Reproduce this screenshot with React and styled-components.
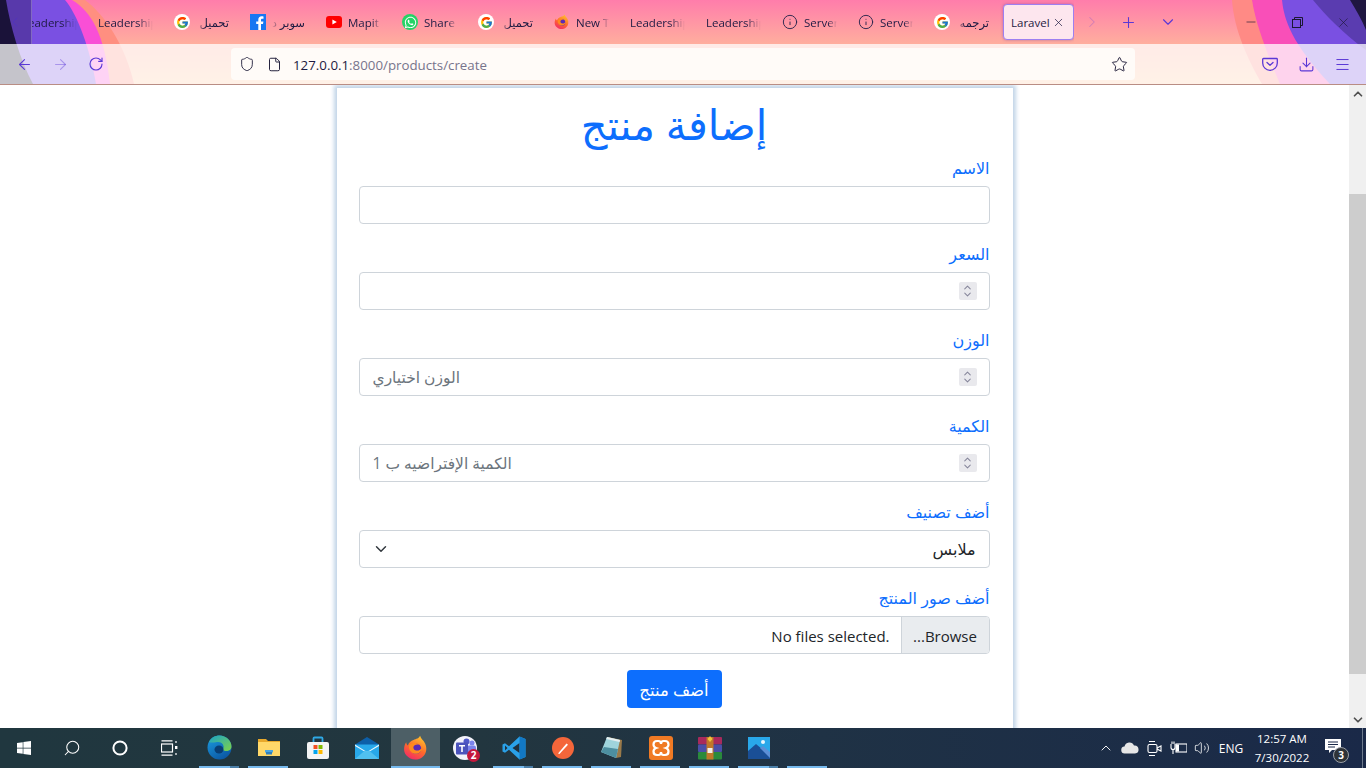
import React from 'react';
import styled, { createGlobalStyle } from 'styled-components';
import {
  ArrowLeft,
  ArrowRight,
  ChevronDown,
  ChevronLeft,
  ChevronRight,
  ChevronUp,
  Download,
  File,
  Info,
  Menu,
  Minus,
  Plus,
  RotateCw,
  Search,
  Shield,
  Star,
  Volume2,
  X
} from 'lucide-react';
import { FaWhatsapp, FaWindows } from 'react-icons/fa';
import { FcGoogle } from 'react-icons/fc';

const uiFont = `"Open Sans", "DejaVu Sans", sans-serif`;
const chevronData =
  "url(\"data:image/svg+xml,%3csvg xmlns='http://www.w3.org/2000/svg' viewBox='0 0 16 16'%3e%3cpath fill='none' stroke='%23343a40' stroke-linecap='round' stroke-linejoin='round' stroke-width='2' d='M2 5l6 6 6-6'/%3e%3c/svg%3e\")";

const GlobalStyle = createGlobalStyle`
  html, body {
    margin: 0;
    height: 100%;
    overflow: hidden;
    background: #fff;
  }
  * {
    box-sizing: border-box;
  }
`;

const Screen = styled.div`
  display: flex;
  flex-direction: column;
  width: 1366px;
  height: 768px;
  overflow: hidden;
  font-family: ${uiFont};
`;

/* browser chrome */
const Chrome = styled.header`
  position: relative;
  flex: none;
  height: 85px;
  border-bottom: 1px solid #b98d84;
  background: linear-gradient(180deg, #ff7dab 0, #ffae9e 44px, #ffc8a0 84px);
`;

const ThemeArt = styled.svg`
  position: absolute;
  top: 0;
  left: 0;
`;

const TabStrip = styled.div`
  position: relative;
  display: flex;
  align-items: center;
  height: 44px;
`;

const ScrollButton = styled.div`
  display: flex;
  flex: none;
  align-items: center;
  justify-content: ${p => (p.$wide ? 'center' : 'flex-start')};
  width: ${p => (p.$wide ? '36px' : '32px')};
  height: 44px;
  padding-left: ${p => (p.$wide ? '0' : '7px')};
  border-right: ${p => (p.$wide ? 'none' : '1px solid rgba(255, 255, 255, 0.25)')};
  background: ${p => (p.$wide ? 'transparent' : 'rgba(25, 15, 70, 0.35)')};
  color: ${p => (p.$wide ? 'rgba(110, 70, 220, 0.3)' : 'rgba(80, 50, 190, 0.9)')};
`;

const TabList = styled.div`
  display: flex;
  flex: none;
  align-items: center;
  width: 1042px;
  height: 44px;
  overflow: hidden;
`;

const Tab = styled.div`
  display: flex;
  flex: none;
  align-items: center;
  gap: 6px;
  width: 76px;
  height: 36px;
  padding: 0 13px 0 8px;
  color: #1d1a42;
  font-size: 11.5px;

  &:first-child {
    margin-left: -18px;
  }
`;

const ActiveTab = styled.div`
  display: flex;
  flex: none;
  align-items: center;
  justify-content: space-between;
  width: 71px;
  height: 36px;
  margin-left: 1px;
  padding: 0 8px 0 7px;
  border: 1px solid #9d7ff0;
  border-radius: 4px;
  background: #fde6ee;
  box-shadow: 0 0 3px rgba(80, 40, 160, 0.4);
  color: #1d1a42;
  font-size: 11.5px;
`;

const TabLabel = styled.span`
  flex: 1;
  min-width: 0;
  overflow: hidden;
  white-space: nowrap;
  text-align: ${p => (p.$rtl ? 'right' : 'left')};
  direction: ${p => (p.$rtl ? 'rtl' : 'ltr')};
  -webkit-mask-image: linear-gradient(
    ${p => (p.$rtl ? '270deg' : '90deg')},
    #000 72%,
    transparent 100%
  );
  mask-image: linear-gradient(
    ${p => (p.$rtl ? '270deg' : '90deg')},
    #000 72%,
    transparent 100%
  );
`;

const FaviconBox = styled.span`
  display: flex;
  flex: none;
  align-items: center;
  justify-content: center;
  width: 16px;
  height: 16px;
  overflow: hidden;
  border-radius: ${p => (p.$round ? '50%' : '0')};
  background: ${p => p.$bg || 'transparent'};
  color: ${p => p.$color || 'inherit'};
`;

const StripButton = styled.div`
  display: flex;
  flex: none;
  align-items: center;
  justify-content: center;
  width: 36px;
  height: 44px;
  margin-left: ${p => p.$shift || 0}px;
  color: #5a38d6;
`;

const StripSpacer = styled.div`
  flex: 1;
`;

const WindowButton = styled.div`
  display: flex;
  flex: none;
  align-items: center;
  justify-content: center;
  width: 46px;
  height: 44px;
  color: #1b1733;
`;

const NavBar = styled.nav`
  position: relative;
  display: flex;
  align-items: center;
  height: 40px;
  padding: 0 6px;
  background: rgba(255, 255, 255, 0.75);
`;

const NavButton = styled.div`
  display: flex;
  flex: none;
  align-items: center;
  justify-content: center;
  width: 36px;
  height: 32px;
  color: ${p => (p.$muted ? 'rgba(90, 56, 214, 0.4)' : '#5a38d6')};
`;

const UrlBar = styled.div`
  display: flex;
  flex: none;
  align-items: center;
  width: 904px;
  height: 32px;
  margin: 0 117px;
  padding: 0 7px 0 8px;
  border-radius: 4px;
  background: #fffbf8;
  color: #26233f;
`;

const UrlIcon = styled.span`
  display: flex;
  flex: none;
  justify-content: center;
  width: 16px;
  margin-right: ${p => p.$gap}px;
`;

const UrlText = styled.div`
  flex: 1;
  padding-top: 1px;
  color: #1d1a42;
  font-size: 13.3px;
`;

const UrlMuted = styled.span`
  color: #77748c;
`;

/* page */
const Viewport = styled.div`
  display: flex;
  flex: 1;
  min-height: 0;
`;

const Page = styled.main`
  flex: 1;
  min-width: 0;
  overflow: hidden;
  background: #fff;
`;

const Card = styled.section`
  width: 676px;
  height: 700px;
  margin: 3px auto 0;
  padding: 0 23px 0 22px;
  background: #fff;
  box-shadow: 0 0 4px 3px #c3d5e8;
`;

const Title = styled.h1`
  height: 66px;
  margin: 0;
  padding-top: 8px;
  color: #0d6efd;
  font-size: 41.5px;
  font-weight: 400;
  line-height: 56px;
  text-align: center;
`;

const Field = styled.div`
  margin-bottom: 16px;
`;

const Label = styled.label`
  display: block;
  height: 24px;
  margin-bottom: 8px;
  color: #0d6efd;
  font-size: 16px;
  line-height: 28px;
  text-align: right;
`;

const FieldBox = styled.div`
  display: flex;
  align-items: center;
  height: 38px;
  overflow: hidden;
  border: 1px solid #ced4da;
  border-radius: 4px;
  background: #fff;
`;

const TextInput = styled.input`
  flex: 1;
  min-width: 0;
  height: 100%;
  padding: 0 13px;
  border: 0;
  outline: 0;
  background: transparent;
  color: #212529;
  font: 15.5px ${uiFont};

  &::placeholder {
    color: #6c757d;
    opacity: 1;
  }
`;

const Spinner = styled.div`
  display: flex;
  flex: none;
  flex-direction: column;
  align-items: center;
  justify-content: center;
  width: 18px;
  height: 18px;
  margin-right: 12px;
  border-radius: 2px;
  background: #e9e9ed;
  color: #85859a;
`;

const SpinUp = styled(ChevronUp)`
  margin-bottom: -2px;
`;

const SpinDown = styled(ChevronDown)`
  margin-top: -2px;
`;

const Select = styled.select`
  display: block;
  width: 100%;
  height: 38px;
  padding: 0 13px 0 36px;
  border: 1px solid #ced4da;
  border-radius: 4px;
  outline: 0;
  appearance: none;
  background: #fff ${chevronData} no-repeat left 13px center / 16px 12px;
  color: #212529;
  font: 16px ${uiFont};
`;

const BrowseButton = styled.button`
  flex: none;
  width: 88px;
  height: 100%;
  padding: 1px 0 0;
  border: 0;
  border-left: 1px solid #ced4da;
  background: #e9ecef;
  color: #212529;
  font: 15px ${uiFont};
`;

const FileName = styled.span`
  padding: 1px 11px 0 0;
  color: #212529;
  font-size: 15px;
  unicode-bidi: plaintext;
`;

const Actions = styled.div`
  display: flex;
  justify-content: center;
`;

const SubmitButton = styled.button`
  width: 95px;
  height: 38px;
  padding: 0;
  border: 0;
  border-radius: 4px;
  background: #0d6efd;
  color: #fff;
  font: 16.5px ${uiFont};
`;

const Scrollbar = styled.aside`
  display: flex;
  flex: none;
  flex-direction: column;
  width: 17px;
  background: #f0f0f0;
`;

const ScrollArrow = styled.div`
  display: flex;
  flex: none;
  align-items: center;
  justify-content: center;
  height: 17px;
  color: #505050;
`;

const ScrollTrack = styled.div`
  flex: 1;
  padding-top: 92px;
`;

const ScrollThumb = styled.div`
  height: 480px;
  background: #cdcdcd;
`;

/* taskbar */
const Taskbar = styled.footer`
  display: flex;
  flex: none;
  align-items: stretch;
  height: 40px;
  background: linear-gradient(90deg, #20373f 0, #22363f 35%, #1f3245 60%, #1a2948 100%);
  color: #fff;
`;

const TaskSlot = styled.div`
  position: relative;
  display: flex;
  flex: none;
  align-items: center;
  justify-content: center;
  width: ${p => p.$width || 49}px;
  padding-bottom: 1px;
  background: ${p => (p.$active ? '#4d5f66' : 'transparent')};

  &::after {
    content: '';
    display: ${p => (p.$running ? 'block' : 'none')};
    position: absolute;
    bottom: 0;
    left: ${p => (p.$active ? '0' : '4px')};
    right: ${p => (p.$active ? '0' : '5px')};
    height: 2px;
    background: ${p =>
      p.$stacked
        ? 'linear-gradient(90deg, #76b9ed 78%, #4b7fa8 78%)'
        : '#76b9ed'};
  }
`;

const TaskSpacer = styled.div`
  flex: 1;
`;

const TrayItem = styled.div`
  display: flex;
  flex: none;
  align-items: center;
  justify-content: center;
  width: ${p => p.$width || 24}px;
  color: #fff;
`;

const TrayLang = styled.div`
  display: flex;
  flex: none;
  align-items: center;
  justify-content: center;
  width: 34px;
  font-size: 12px;
`;

const Clock = styled.div`
  display: flex;
  flex: none;
  flex-direction: column;
  align-items: center;
  justify-content: center;
  width: 68px;
  font-size: 11.5px;
  line-height: 19px;
`;

const NotifyButton = styled.div`
  position: relative;
  display: flex;
  flex: none;
  align-items: center;
  justify-content: center;
  width: 46px;
  padding: 0 12px 4px 0;
`;

const NotifyBadge = styled.span`
  position: absolute;
  top: 19px;
  right: 13px;
  width: 16px;
  height: 16px;
  border: 1px solid #9a9fa6;
  border-radius: 50%;
  background: #2e3338;
  font-size: 10px;
  font-weight: 700;
  line-height: 14px;
  text-align: center;
`;

const ShowDesktop = styled.div`
  flex: none;
  width: 4px;
  border-left: 1px solid #6d7a8c;
`;

const TeamsBadge = styled.span`
  position: absolute;
  top: 21px;
  left: 27px;
  width: 13px;
  height: 13px;
  border-radius: 50%;
  background: #c4183c;
  font-size: 10px;
  font-weight: 700;
  line-height: 13px;
  text-align: center;
`;

const FirefoxIcon = ({ size }) => (
  <svg width={size} height={size} viewBox="0 0 32 32">
    <defs>
      <linearGradient id="ffBody" x1="0.7" y1="0" x2="0.2" y2="1">
        <stop offset="0" stopColor="#ffc12e" />
        <stop offset="0.5" stopColor="#ff6a2a" />
        <stop offset="1" stopColor="#f2256c" />
      </linearGradient>
    </defs>
    <path
      d="M21 1c1 4 4 5 6 9 3 6 2 13-3 17-6 5-15 4-20-2C0 20 1 13 4 9c0 2 1 3 2 4 1-4 4-6 7-7 3-1 7-2 8-5z"
      fill="url(#ffBody)"
    />
    <circle cx="16" cy="17" r="6.5" fill="#5b2bb5" />
    <path
      d="M8 12c3-3 9-3 12 0-3-1-6 0-7 2-1 3 2 6 6 5 3-1 4-3 5-5 0 6-5 10-10 9-5-1-8-7-6-11z"
      fill="#ff8a1e"
    />
  </svg>
);

const FaviconYoutube = () => (
  <svg width="16" height="16" viewBox="0 0 16 16">
    <rect y="2" width="16" height="12" rx="3" fill="#f00" />
    <path d="M6.4 5.4 10.8 8l-4.4 2.6z" fill="#fff" />
  </svg>
);

const FaviconFacebook = () => (
  <svg width="16" height="16" viewBox="0 0 16 16">
    <rect width="16" height="16" fill="#1877f2" />
    <path
      d="M11 16v-6h2l.4-2.5H11V6c0-.8.3-1.3 1.3-1.3h1.2V2.5c-.5-.1-1.2-.2-1.9-.2-2 0-3.3 1.2-3.3 3.4v1.8H6.2V10h2.1v6z"
      fill="#fff"
    />
  </svg>
);

const FaviconGoogle = () => (
  <FaviconBox $round $bg="#fff">
    <FcGoogle size={13} />
  </FaviconBox>
);

const FaviconInfo = () => <Info size={16} strokeWidth={1.4} color="#28244c" />;

const TABS = [
  { label: 'Leadership' },
  { label: 'Leadership' },
  { label: 'تحميل', rtl: true, icon: <FaviconGoogle /> },
  { label: 'سوبر د', rtl: true, icon: <FaviconFacebook /> },
  { label: 'Mapit', icon: <FaviconYoutube /> },
  {
    label: 'Share',
    icon: (
      <FaviconBox $round $bg="#25d366" $color="#fff">
        <FaWhatsapp size={13} />
      </FaviconBox>
    )
  },
  { label: 'تحميل', rtl: true, icon: <FaviconGoogle /> },
  { label: 'New Tab', icon: <FirefoxIcon size={16} /> },
  { label: 'Leadership' },
  { label: 'Leadership' },
  { label: 'Server', icon: <FaviconInfo /> },
  { label: 'Server', icon: <FaviconInfo /> },
  { label: 'ترجمه', rtl: true, icon: <FaviconGoogle /> }
];

const ThemeBackground = () => (
  <ThemeArt width="1366" height="84" viewBox="0 0 1366 84">
    <path d="M0 0H85C105 15 125 45 134 84H0Z" fill="#ff8f80" />
    <path d="M0 0H72C92 12 104 34 110 84H0Z" fill="#f94fd6" />
    <path d="M0 0H65C78 15 90 50 96 84H0Z" fill="#7a50e2" />
    <path d="M0 0H6C10 25 20 60 33 84H0Z" fill="#1b1433" />
    <path d="M1232 0C1234 30 1248 60 1262 84H1366V0Z" fill="#ff8a85" />
    <path d="M1252 0C1256 25 1266 50 1280 84H1366V0Z" fill="#f94fb8" />
    <path d="M1282 0C1284 20 1292 44 1330 84H1366V0Z" fill="#7a50e2" />
    <path d="M1313 0C1325 15 1345 35 1366 50V0Z" fill="#5a3cb0" />
    <path d="M1350 0C1356 10 1362 20 1366 30V0Z" fill="#1f1640" />
  </ThemeArt>
);

const RestoreIcon = () => (
  <svg width="11" height="11" viewBox="0 0 11 11" fill="none" stroke="#1b1733" strokeWidth="1">
    <rect x="0.5" y="2.5" width="8" height="8" />
    <path d="M2.500 2.500V0.500h8v8h-2" />
  </svg>
);

const PocketIcon = () => (
  <svg width="16" height="16" viewBox="0 0 16 16" fill="none" stroke="#5a38d6" strokeWidth="1.3">
    <path d="M1.5 2.5h13a.8.8 0 0 1 .8.8V7a7.3 7.3 0 0 1-14.6 0V3.3a.8.8 0 0 1 .8-.8z" />
    <path d="M5 6.5 8 9.3l3-2.8" strokeLinecap="round" strokeLinejoin="round" />
  </svg>
);

const TaskViewIcon = () => (
  <svg width="17" height="16" viewBox="0 0 17 16" fill="none" stroke="#fff" strokeWidth="1.2">
    <path d="M0.5 0.8h11M0.5 15.2h11" />
    <rect x="0.5" y="4" width="11" height="8" />
    <path d="M15 1v2M15 13v2" />
    <rect x="14" y="6" width="2.4" height="3" fill="#fff" stroke="none" />
  </svg>
);

const EdgeIcon = () => (
  <svg width="25" height="25" viewBox="0 0 25 25">
    <defs>
      <linearGradient id="edgeBlue" x1="0" y1="0" x2="0.6" y2="1">
        <stop offset="0" stopColor="#1b9de2" />
        <stop offset="1" stopColor="#0c59a4" />
      </linearGradient>
      <linearGradient id="edgeGreen" x1="0" y1="0" x2="1" y2="1">
        <stop offset="0" stopColor="#1aa3c9" />
        <stop offset="1" stopColor="#7ed348" />
      </linearGradient>
    </defs>
    <circle cx="12.5" cy="12.5" r="12" fill="url(#edgeBlue)" />
    <path
      d="M2 7C4 2.500 8 .5 12.500.5c6.500 0 12 5 12 11 0 3-2.500 4.500-5 4.500-2 0-3.500-.6-4-1.500 1-1 1.300-2 1-3.500C16 8 13 6.500 10 7 6.500 7.500 4 8 2 7z"
      fill="url(#edgeGreen)"
    />
    <ellipse cx="12" cy="14.500" rx="4.500" ry="4" fill="#083e75" />
  </svg>
);

const ExplorerIcon = () => (
  <svg width="22" height="19" viewBox="0 0 22 19">
    <path d="M0 1h8l2 2h12v15H0z" fill="#e8a92c" />
    <rect x="0" y="4" width="22" height="14" fill="#ffd869" />
    <rect x="7" y="12" width="8" height="2.500" fill="#4aa5e0" />
    <path d="M8 14h6v2.500H8z" fill="#2f7fbd" />
  </svg>
);

const StoreIcon = () => (
  <svg width="24" height="24" viewBox="0 0 24 24">
    <path d="M7.500 6V2.500a1 1 0 0 1 1-1h7a1 1 0 0 1 1 1V6" fill="none" stroke="#2fa9e6" strokeWidth="1.800" />
    <rect x="1" y="6" width="22" height="17" rx="2" fill="#f3f4f4" />
    <rect x="7.500" y="9" width="4" height="4" fill="#f25022" />
    <rect x="12.500" y="9" width="4" height="4" fill="#7fba00" />
    <rect x="7.500" y="14" width="4" height="4" fill="#00a4ef" />
    <rect x="12.500" y="14" width="4" height="4" fill="#ffb900" />
  </svg>
);

const MailIcon = () => (
  <svg width="24" height="22" viewBox="0 0 24 22">
    <path d="M0 7.500 12 0l12 7.500V9H0z" fill="#0d5fa8" />
    <rect y="7.500" width="24" height="14.500" fill="#28a8ea" />
    <path d="M0 7.500 12 15l12-7.500V9l-12 7L0 9z" fill="#e8f6fd" />
    <path d="M0 22 10 13.500 12 15l2-1.500L24 22z" fill="#50c0f0" />
  </svg>
);

const TeamsIcon = () => (
  <svg width="24" height="24" viewBox="0 0 24 24">
    <circle cx="12" cy="12" r="12" fill="#f2f2fa" />
    <circle cx="19" cy="7" r="2.500" fill="#7b83eb" />
    <circle cx="13.500" cy="5.500" r="3" fill="#5059c9" />
    <rect x="14" y="9.500" width="9" height="8" rx="2" fill="#7b83eb" />
    <rect x="3" y="6.500" width="12" height="12" rx="1" fill="#4b53bc" />
    <path d="M6 9h6v1.600h-2.200V16H8.200v-5.400H6z" fill="#fff" />
  </svg>
);

const VsCodeIcon = () => (
  <svg width="24" height="24" viewBox="0 0 24 24">
    <path d="M17.500.5 23.500 3v18l-6 2.500L7 13.800l-4 3-2.500-1.300V8.500L3 7.200l4 3z" fill="#2aa1e8" />
    <path d="M17.500 7 10.500 12l7 5z" fill="#20303c" />
    <path d="M3 9.500v5l2.500-2.500z" fill="#20303c" />
    <path d="M17.500.5 23.500 3v18l-6 2.500z" fill="#1278c4" />
  </svg>
);

const PenIcon = () => (
  <svg width="22" height="22" viewBox="0 0 22 22">
    <circle cx="11" cy="11" r="11" fill="#f4663a" />
    <path d="M6 16.500 14.500 6.500l1.500 1.300L7.500 17z" fill="#fff" />
  </svg>
);

const NotepadIcon = () => (
  <svg width="24" height="24" viewBox="0 0 24 24">
    <path d="M8 1 22 4l-1 17-5 1z" fill="#9a7a4a" />
    <path d="M7 1 20 4 16 22 1 16z" fill="#9fd4dc" />
    <path d="M4 11 18 13 16 22 1 16z" fill="#4d8fa0" />
    <path d="M7 1 20 4l-.4 2L6.200 3z" fill="#e6eef0" />
  </svg>
);

const XamppIcon = () => (
  <svg width="24" height="24" viewBox="0 0 24 24">
    <rect width="24" height="24" rx="3" fill="#f07a24" />
    <path
      d="M8 5h1.500C11 5 12 6.500 12 8c0-1.500 1-3 2.500-3H16c2 0 3.500 1.500 3.500 3.500 0 1.500-1 3-2.500 3.500 1.500.5 2.500 2 2.500 3.500 0 2-1.500 3.500-3.500 3.500h-1.500C13 19 12 17.500 12 16c0 1.500-1 3-2.500 3H8c-2 0-3.500-1.500-3.500-3.500 0-1.500 1-3 2.500-3.500-1.500-.5-2.500-2-2.500-3.500C4.500 6.500 6 5 8 5z"
      fill="none"
      stroke="#fff"
      strokeWidth="2.200"
    />
  </svg>
);

const WinRarIcon = () => (
  <svg width="24" height="24" viewBox="0 0 24 24">
    <rect y="1" width="24" height="7.500" rx="1" fill="#a82a5c" />
    <rect y="8.500" width="24" height="7.500" rx="1" fill="#4a4fa8" />
    <rect y="16" width="24" height="7.500" rx="1" fill="#2a8a3c" />
    <rect x="8.500" y="1" width="7" height="22.500" fill="#c0782a" />
    <rect x="9.500" y="12" width="5" height="5" fill="#f2f0e8" />
    <path d="M12 0l2.500 3-2.500 3-2.500-3z" fill="#f2c43c" />
  </svg>
);

const PhotosIcon = () => (
  <svg width="22" height="22" viewBox="0 0 22 22">
    <rect width="22" height="22" fill="#29a8ea" />
    <circle cx="15" cy="5" r="2" fill="#e8f6fd" />
    <path d="M0 22V14L8 7l14 12v3z" fill="#1a4f96" />
    <path d="M12 11l3-2 7 6v6z" fill="#5c8fd6" />
  </svg>
);

const MeetIcon = () => (
  <svg width="17" height="17" viewBox="0 0 17 17" fill="none" stroke="#fff" strokeWidth="1.100">
    <rect x="2" y="4.500" width="9" height="8" rx="1.500" />
    <path d="M11 8l4-2v5l-4-2" />
    <path d="M3 1.500h6M3 15.500h6" />
  </svg>
);

const PowerIcon = () => (
  <svg width="17" height="14" viewBox="0 0 17 14" fill="none" stroke="#fff" strokeWidth="1.100">
    <rect x="6" y="3" width="11" height="8" />
    <rect x="6" y="3.500" width="3" height="7" fill="#fff" stroke="none" />
    <path d="M1 3v3.500a2 2 0 0 0 4 0V3M2 3V0.500M4 3V0.500M3 8.500V13" />
  </svg>
);

const CloudIcon = () => (
  <svg width="18" height="12" viewBox="0 0 18 12">
    <path d="M4 11.500a3.500 3.500 0 0 1-.5-7A5 5 0 0 1 13 3.500a4 4 0 0 1 1 8z" fill="#e6e6e6" />
  </svg>
);

const NotifyIcon = () => (
  <svg width="16" height="14" viewBox="0 0 16 14">
    <path d="M0 0h16v11H7l-3 3v-3H0z" fill="#fff" />
    <path d="M3 3h10M3 5.500h10M3 8h7" stroke="#1a2948" strokeWidth="1" />
  </svg>
);

const APPS = [
  { key: 'edge', icon: <EdgeIcon />, running: true, stacked: true },
  { key: 'explorer', icon: <ExplorerIcon />, running: true, stacked: false },
  { key: 'store', icon: <StoreIcon /> },
  { key: 'mail', icon: <MailIcon /> },
  { key: 'firefox', icon: <FirefoxIcon size={26} />, running: true, active: true },
  { key: 'teams', icon: <TeamsIcon />, badge: '2' },
  { key: 'code', icon: <VsCodeIcon />, running: true, stacked: true },
  { key: 'pen', icon: <PenIcon />, running: true },
  { key: 'notepad', icon: <NotepadIcon />, running: true },
  { key: 'xampp', icon: <XamppIcon />, running: true },
  { key: 'winrar', icon: <WinRarIcon />, running: true },
  { key: 'photos', icon: <PhotosIcon />, running: true, stacked: true },
  { key: 'blank', icon: null, running: true }
];

const NUMBER_FIELDS = [
  { label: 'السعر', placeholder: '' },
  { label: 'الوزن', placeholder: 'الوزن اختياري' },
  { label: 'الكمية', placeholder: 'الكمية الإفتراضيه ب 1' }
];

const NumberSpinner = () => (
  <Spinner>
    <SpinUp size={11} strokeWidth={2.2} />
    <SpinDown size={11} strokeWidth={2.2} />
  </Spinner>
);

export default function App() {
  return (
    <Screen>
      <GlobalStyle />
      <Chrome>
        <ThemeBackground />
        <TabStrip>
          <ScrollButton>
            <ChevronLeft size={16} strokeWidth={1.4} />
          </ScrollButton>
          <TabList>
            {TABS.map((tab, i) => (
              <Tab key={i}>
                {tab.icon}
                <TabLabel $rtl={tab.rtl}>{tab.label}</TabLabel>
              </Tab>
            ))}
            <ActiveTab>
              <span>Laravel</span>
              <X size={13} strokeWidth={1.3} />
            </ActiveTab>
          </TabList>
          <ScrollButton $wide>
            <ChevronRight size={18} strokeWidth={1.4} />
          </ScrollButton>
          <StripButton>
            <Plus size={17} strokeWidth={1.5} />
          </StripButton>
          <StripButton $shift={4}>
            <ChevronDown size={18} strokeWidth={1.5} />
          </StripButton>
          <StripSpacer />
          <WindowButton>
            <Minus size={14} strokeWidth={1.1} />
          </WindowButton>
          <WindowButton>
            <RestoreIcon />
          </WindowButton>
          <WindowButton>
            <X size={15} strokeWidth={1} />
          </WindowButton>
        </TabStrip>
        <NavBar>
          <NavButton>
            <ArrowLeft size={17} strokeWidth={1.5} />
          </NavButton>
          <NavButton $muted>
            <ArrowRight size={17} strokeWidth={1.5} />
          </NavButton>
          <NavButton>
            <RotateCw size={16} strokeWidth={1.7} />
          </NavButton>
          <UrlBar>
            <UrlIcon $gap={11}>
              <Shield size={16} strokeWidth={1.4} />
            </UrlIcon>
            <UrlIcon $gap={11}>
              <File size={15} strokeWidth={1.6} />
            </UrlIcon>
            <UrlText>
              127.0.0.1<UrlMuted>:8000/products/create</UrlMuted>
            </UrlText>
            <Star size={17} strokeWidth={1.4} />
          </UrlBar>
          <NavButton>
            <PocketIcon />
          </NavButton>
          <NavButton>
            <Download size={17} strokeWidth={1.5} />
          </NavButton>
          <NavButton>
            <Menu size={17} strokeWidth={1.4} />
          </NavButton>
        </NavBar>
      </Chrome>

      <Viewport>
        <Page>
          <Card>
            <Title>إضافة منتج</Title>
            <Field>
              <Label>الاسم</Label>
              <FieldBox>
                <TextInput type="text" />
              </FieldBox>
            </Field>
            {NUMBER_FIELDS.map(field => (
              <Field key={field.label}>
                <Label>{field.label}</Label>
                <FieldBox>
                  <TextInput type="text" placeholder={field.placeholder} />
                  <NumberSpinner />
                </FieldBox>
              </Field>
            ))}
            <Field>
              <Label>أضف تصنيف</Label>
              <Select dir="rtl" defaultValue="clothes">
                <option value="clothes">ملابس</option>
              </Select>
            </Field>
            <Field>
              <Label>أضف صور المنتج</Label>
              <FieldBox dir="rtl">
                <BrowseButton type="button">Browse...</BrowseButton>
                <FileName>No files selected.</FileName>
              </FieldBox>
            </Field>
            <Actions>
              <SubmitButton type="button">أضف منتج</SubmitButton>
            </Actions>
          </Card>
        </Page>
        <Scrollbar>
          <ScrollArrow>
            <ChevronUp size={14} strokeWidth={3} />
          </ScrollArrow>
          <ScrollTrack>
            <ScrollThumb />
          </ScrollTrack>
          <ScrollArrow>
            <ChevronDown size={14} strokeWidth={3} />
          </ScrollArrow>
        </Scrollbar>
      </Viewport>

      <Taskbar>
        <TaskSlot $width={48}>
          <FaWindows size={16} />
        </TaskSlot>
        <TaskSlot $width={48}>
          <Search size={18} strokeWidth={1.4} style={{ transform: 'scaleX(-1)' }} />
        </TaskSlot>
        <TaskSlot $width={48}>
          <svg width="16" height="16" viewBox="0 0 16 16">
            <circle cx="8" cy="8" r="6.6" fill="none" stroke="#fff" strokeWidth="2" />
          </svg>
        </TaskSlot>
        <TaskSlot $width={51}>
          <TaskViewIcon />
        </TaskSlot>
        {APPS.map(app => (
          <TaskSlot
            key={app.key}
            $running={app.running}
            $active={app.active}
            $stacked={app.stacked}
          >
            {app.icon}
            {app.badge && <TeamsBadge>{app.badge}</TeamsBadge>}
          </TaskSlot>
        ))}
        <TaskSpacer />
        <TrayItem>
          <ChevronUp size={16} strokeWidth={1.4} />
        </TrayItem>
        <TrayItem>
          <CloudIcon />
        </TrayItem>
        <TrayItem>
          <MeetIcon />
        </TrayItem>
        <TrayItem>
          <PowerIcon />
        </TrayItem>
        <TrayItem>
          <Volume2 size={16} strokeWidth={1.2} />
        </TrayItem>
        <TrayLang>ENG</TrayLang>
        <Clock>
          <span>12:57 AM</span>
          <span>7/30/2022</span>
        </Clock>
        <NotifyButton>
          <NotifyIcon />
          <NotifyBadge>3</NotifyBadge>
        </NotifyButton>
        <ShowDesktop />
      </Taskbar>
    </Screen>
  );
}
